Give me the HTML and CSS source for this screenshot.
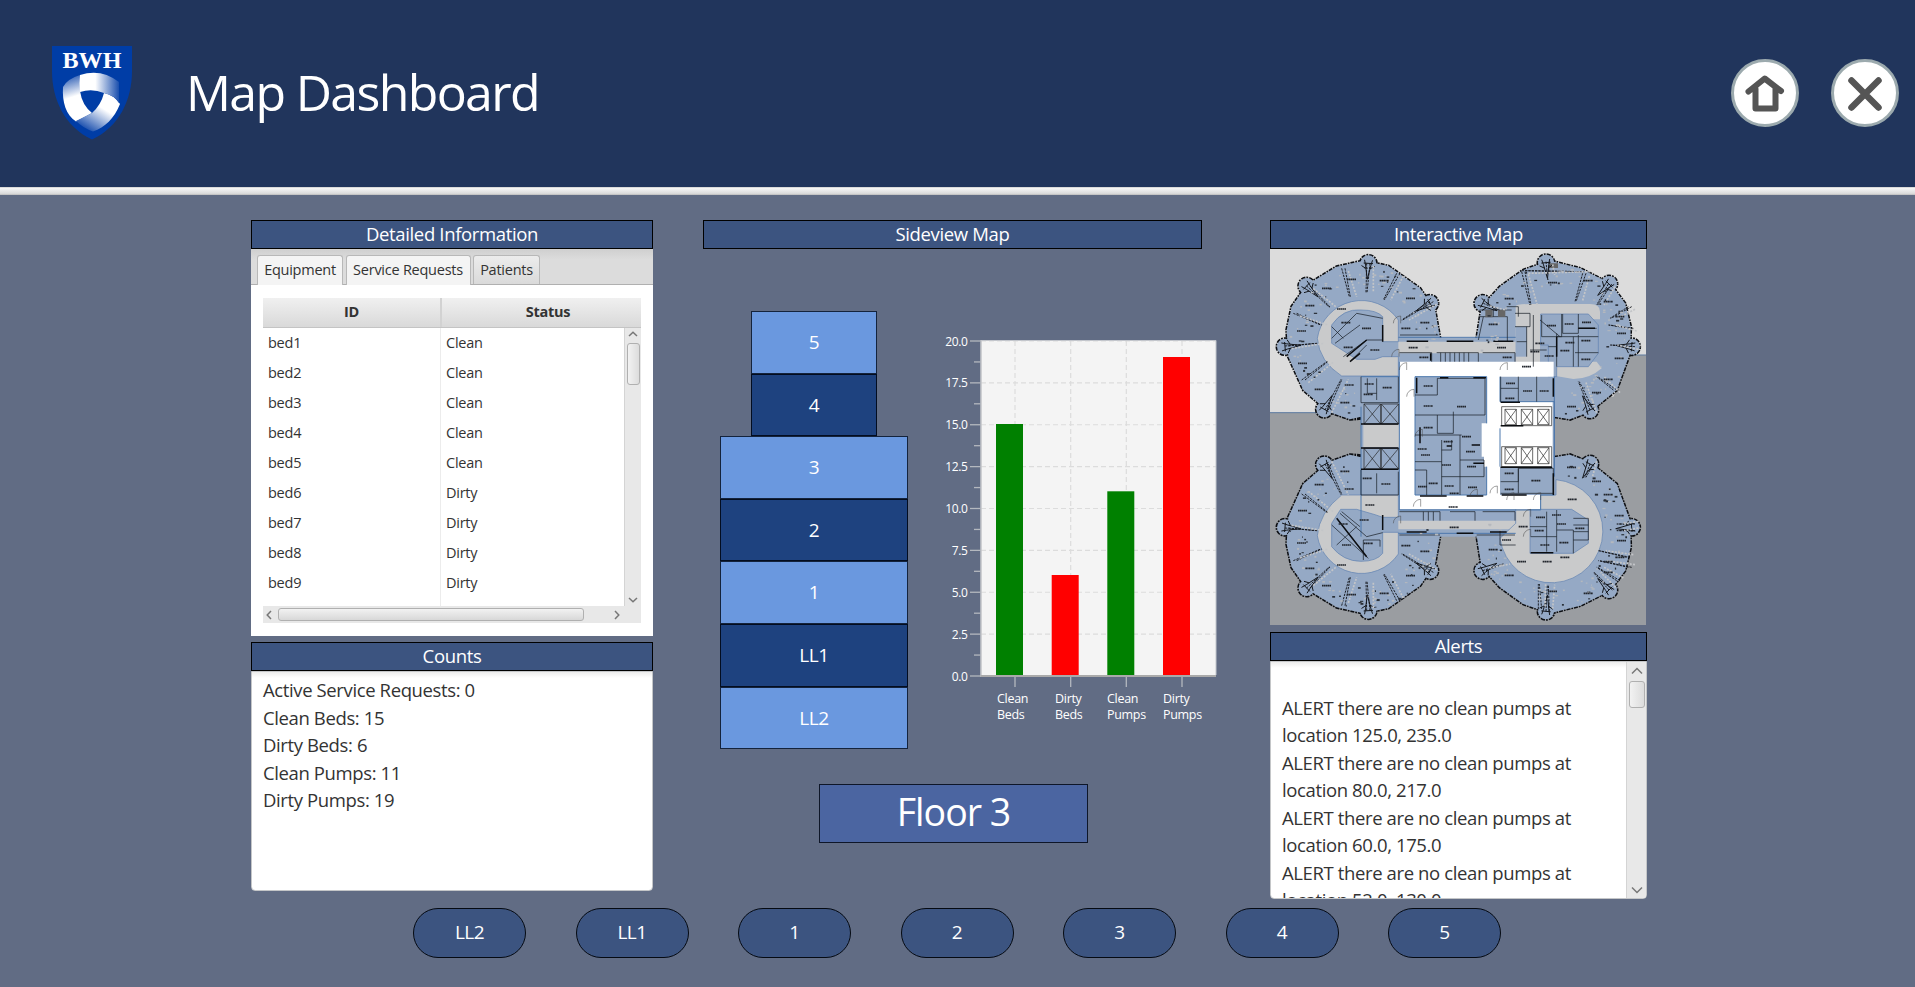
FILE: index.html
```
<!DOCTYPE html>
<html lang="en">
<head>
<meta charset="utf-8">
<title>Map Dashboard</title>
<link rel="stylesheet" href="styles.css">
</head>
<body>
<header class="top">
  <svg class="logo" viewBox="0 0 82 96" width="82" height="96">
    <defs>
      <linearGradient id="ga" x1="0" x2="1" y1="0" y2="0"><stop offset=".4" stop-color="#fff"/><stop offset="1" stop-color="#1a4fae"/></linearGradient>
      <linearGradient id="gb" x1=".1" x2=".3" y1="0" y2="1"><stop offset="0" stop-color="#1a4fae"/><stop offset=".5" stop-color="#fff"/></linearGradient>
      <linearGradient id="gc" x1="1" x2=".3" y1="0" y2="1"><stop offset=".45" stop-color="#fff"/><stop offset="1" stop-color="#1a4fae"/></linearGradient>
    </defs>
    <path d="M1 1H81V26C81 55 68 82 41 94.500C14 82 1 55 1 26Z" fill="#003da6"/>
    <text x="41" y="22.500" class="logo-text" text-anchor="middle" textLength="59" lengthAdjust="spacingAndGlyphs">BWH</text>
    <path d="M29 30Q16 34 12 42C11 57 15 70 25 76.500L41 68Q31 60 29 46Z" fill="url(#gb)"/>
    <path d="M69 59C63 74 54 82 42 86.500Q32 83 25 76L41 68Q50 60 53 48Q63 50 69 59Z" fill="url(#gc)"/>
    <path d="M29 30Q50 23 68 37V58Q63 50 53 48Q41 43 29 47Q28 38 29 30Z" fill="url(#ga)"/>
  </svg>
  <h1 class="title">Map Dashboard</h1>
  <div class="actions">
    <svg class="round" viewBox="0 0 70 70" width="70" height="70">
      <circle cx="35" cy="35" r="32.500" fill="#fff" stroke="#9caaae" stroke-width="3"/>
      <path d="M18.500 33.500L34.700 20.500L51 33M25.500 31V50.500H45.500V31" fill="none" stroke="#555" stroke-width="6" stroke-linecap="round" stroke-linejoin="round"/>
    </svg>
    <svg class="round" viewBox="0 0 70 70" width="70" height="70">
      <circle cx="35" cy="35" r="32.500" fill="#fff" stroke="#9caaae" stroke-width="3"/>
      <path d="M21.500 22.500L48.500 49.500M48.500 22.500L21.500 49.500" stroke="#555" stroke-width="6.500" stroke-linecap="round"/>
    </svg>
  </div>
</header>
<div class="divider"></div>

<main class="board">
  <section class="col left">
    <h2 class="bar">Detailed Information</h2>
    <div class="tabpane">
      <div class="tabs">
        <span class="tab on t1">Equipment</span><span class="tab on t2">Service Requests</span><span class="tab t3">Patients</span>
      </div>
      <div class="table">
        <div class="thead"><span class="c1">ID</span><span class="c2">Status</span></div>
        <div class="tbody">
          <div class="rows">
            <div class="row"><span>bed1</span><span>Clean</span></div>
            <div class="row"><span>bed2</span><span>Clean</span></div>
            <div class="row"><span>bed3</span><span>Clean</span></div>
            <div class="row"><span>bed4</span><span>Clean</span></div>
            <div class="row"><span>bed5</span><span>Clean</span></div>
            <div class="row"><span>bed6</span><span>Dirty</span></div>
            <div class="row"><span>bed7</span><span>Dirty</span></div>
            <div class="row"><span>bed8</span><span>Dirty</span></div>
            <div class="row"><span>bed9</span><span>Dirty</span></div>
            <div class="row"><span></span><span></span></div>
          </div>
          <div class="vbar">
            <svg viewBox="0 0 10 6" width="10" height="6"><path d="M1 5L5 1.200L9 5" class="chev"/></svg>
            <i class="thumb"></i>
            <svg class="end" viewBox="0 0 10 6" width="10" height="6"><path d="M1 1L5 4.800L9 1" class="chev"/></svg>
          </div>
        </div>
        <div class="hbar">
          <svg viewBox="0 0 6 10" width="6" height="10"><path d="M5 1L1.200 5L5 9" class="chev"/></svg>
          <i class="thumb wide"></i>
          <svg class="end-h" viewBox="0 0 6 10" width="6" height="10"><path d="M1 1L4.800 5L1 9" class="chev"/></svg>
        </div>
      </div>
    </div>
    <h2 class="bar">Counts</h2>
    <div class="area counts">Active Service Requests: 0<br>Clean Beds: 15<br>Dirty Beds: 6<br>Clean Pumps: 11<br>Dirty Pumps: 19</div>
  </section>

  <section class="col center">
    <h2 class="bar side">Sideview Map</h2>
    <div class="view">
      <div class="stack">
        <div class="floor small">5</div>
        <div class="floor small dark">4</div>
        <div class="floor">3</div>
        <div class="floor dark">2</div>
        <div class="floor">1</div>
        <div class="floor dark">LL1</div>
        <div class="floor">LL2</div>
      </div>
      <svg class="chart" viewBox="930 320 290 420" width="290" height="420">
        <rect x="981" y="340.500" width="235" height="335.500" fill="#f4f4f4"/>
        <g class="grid" id="grid"></g>
        <path d="M981 340.500H1216V675" fill="none" stroke="#c3c6cc" stroke-width="1"/>
        <path d="M981 340V676" stroke="#c4c6ca" stroke-width="1.600"/>
        <g fill="#008000"><rect x="996" y="424" width="27" height="252"/><rect x="1107.300" y="491.300" width="27" height="185"/></g>
        <g fill="#f00"><rect x="1051.700" y="575" width="27" height="101"/><rect x="1163" y="357" width="27" height="319"/></g>
        <path d="M980 676H1216" stroke="#aaa" stroke-width="2"/>
        <g id="ticks" class="ticks"></g>
        <g class="xlab">
          <text x="997" y="703">Clean</text><text x="997" y="719">Beds</text>
          <text x="1055" y="703">Dirty</text><text x="1055" y="719">Beds</text>
          <text x="1107" y="703">Clean</text><text x="1107" y="719">Pumps</text>
          <text x="1163" y="703">Dirty</text><text x="1163" y="719">Pumps</text>
        </g>
      </svg>
    </div>
    <div class="current">Floor 3</div>
  </section>

  <section class="col right">
    <h2 class="bar">Interactive Map</h2>
    <svg class="map" viewBox="30 117 1128 1128" width="376" height="376">
      <rect x="30" y="117" width="1128" height="1128" fill="#dcdcdc"/>
      <path d="M30 608H300L700 520L1060 560L1110 435H1158V1245H30Z" fill="#9a9da1"/>
      <path d="M30 608H220M1110 435H1158" stroke="#5d7ba0" stroke-width="3"/>
      <g id="shell" class="shell"></g>
      <g class="blue">
        <path d="M303 385H883V980H303Z"/>
        <path d="M415 385H767V500H415ZM415 860H767V970H415Z"/>
      </g>
      <!-- corridors -->
      <g fill="#c9cacb">
        <path d="M415 395H767V430H415ZM415 932H767V958H415ZM310 643H418V712H310Z"/>
        <path d="M767 290Q767 282 816 282H990Q1020 282 1020 305V328H840V500H767Z"/>
        <path d="M883 455H1010L1025 475Q990 507 940 507L883 497Z"/>
        <path d="M767 897H840V855H895V1060H767Z"/>
      </g>
      <path d="M415 330A134 134 0 0 0 172 385Q178 455 245 498H415V440H368L345 448H290L215 400V345Q250 295 303 300Q350 300 368 320V395H415Z" fill="#c9cacb" class="edge"/>
      <path d="M415 1032A134 134 0 0 1 172 977Q178 907 245 855H415V922H368L345 914L290 898L242 898L215 940V1010Q250 1054 303 1054Q350 1054 368 1030V967H415Z" fill="#c9cacb" class="edge"/>
      <path d="M888 809A155 155 0 1 1 720 985L767 940V897H840V855H888Z" fill="#c9cacb" class="edge"/>
      <path d="M810 898H935L985 930V1000L940 1030H810Z" class="blue edge"/>
      <g class="blue edge"><path d="M842 312H985L1015 345V430L985 470H890V500H865V405H842Z"/></g>
      <path d="M767 350H800V440H767Z" class="blue"/>
      <!-- white main hall -->
      <path fill="#fff" fill-rule="evenodd" d="M418 455H881V500H720V575H878V770H720V855H840V897H418ZM465 500V855H680V500Z"/>
      <path fill="#fff" d="M665 640H682V770H672V740H665Z"/>
      <path d="M720 655V770M303 500H418M303 590V980M418 455V900M465 500V855M465 500H680V640M720 500V575H883V770M883 500V800M465 855H680V770M418 900H842V855H883M415 382H767M415 970H767" class="wall"/>
      <g class="lift">
        <path d="M312 582h50v60h-50zl50 60m0-60l-50 60M364 582h52v60h-52zl52 60m0-60l-52 60"/>
        <path d="M312 715h50v62h-50zl50 62m0-62l-50 62M364 715h52v62h-52zl52 62m0-62l-52 62"/>
        <path fill="#fff" d="M725 590h150v57h-150zM725 710h150v60h-150z"/>
        <path d="M735 598h34v46h-34zl34 46m0-46l-34 46M784 598h34v46h-34zl34 46m0-46l-34 46M833 598h34v46h-34zl34 46m0-46l-34 46"/>
        <path d="M735 713h34v48h-34zl34 48m0-48l-34 48M784 713h34v48h-34zl34 48m0-48l-34 48M833 713h34v48h-34zl34 48m0-48l-34 48"/>
      </g>
      <g class="rooms">
        <path d="M465 555H532V505H675V615H465M532 615V670H580V605M465 675H605M600 675V855M545 690V855M465 755H545M600 750H672V800H600M465 780H500V855M545 800H600M575 690V720H545"/>
        <path d="M303 500V578H415V500M350 505V570M322 505V550H350M303 780V855H415V785M350 790V850M722 575V500M775 500V575M830 500V575M722 535H775M775 775V850M722 815H775V775H880V850H722"/>
        <path d="M418 428H515V455M530 428H655V455M668 428H765V455M542 428V455M556 428V455M570 428V455M584 428V455M598 428V455M612 428V455M626 428V455M418 905H540V932M570 905H645V932M668 905H765V932M490 905V932M505 905V932M520 905V932"/>
        <path d="M215 385L290 310L368 325M225 400L300 345M250 440L320 390H368M275 450L320 405M215 350L250 385M215 945L325 1045M240 910L320 980L368 968M245 905L300 950M230 1005L290 950M310 1050V990H360V1010"/>
        <path d="M845 315V380H905V312M908 312V370H955V312M955 355H1010M955 375V470M890 380H1015M890 370V470M940 380V470M945 428H1015M820 315V470M865 410H890M840 330L900 380M800 350V440M810 420H860M770 395H800"/>
        <path d="M860 905V1025M890 900V1025M812 980H890M890 960H940V1030M940 925H985V990H940M940 945H985M940 965H985M720 960V1005H767M810 950H860"/>
        <path d="M658 320H742V395M658 300H755M740 290H775V320M700 300V320M765 310H810V350H765M655 390L670 320"/>
        <path d="M418 975H540M650 975H765M420 375H535"/>
      </g>
      <path class="heavy" d="M440 394H505M560 394H640M700 394H760M470 503V550M480 652V700M540 503H565M640 503H678M560 708H575M640 760H672M660 705H635M722 577H780M722 772H876M722 647H790M303 642H415M303 714H415M303 778H415M368 345V395M368 915V960M440 966H500M590 970H640M690 966H740M880 505V560M880 790V855M512 430V452M725 855H800M260 440L320 390M270 455L300 430M230 925L320 1040M812 1028H880M890 380V440M955 355H1005M480 858H560M620 858H670"/>
      <g fill="#666"><path d="M676 300h22v22h-22zM714 300h22v20h-22zM868 160h26v14h-26z"/></g>
      <g id="details"></g>
    </svg>
    <h2 class="bar alerts-bar">Alerts</h2>
    <div class="area alerts">
      <div class="alert-text"><br>ALERT there are no clean pumps at<br>location 125.0, 235.0<br>ALERT there are no clean pumps at<br>location 80.0, 217.0<br>ALERT there are no clean pumps at<br>location 60.0, 175.0<br>ALERT there are no clean pumps at<br>location 52.0, 130.0</div>
      <div class="vbar big">
        <svg viewBox="0 0 12 8" width="12" height="8"><path d="M1 6.500L6 1.500L11 6.500" class="chev"/></svg>
        <i class="thumb"></i>
        <svg class="end" viewBox="0 0 12 8" width="12" height="8"><path d="M1 1.500L6 6.500L11 1.500" class="chev"/></svg>
      </div>
    </div>
  </section>
</main>

<nav class="floors">
  <button class="pill">LL2</button><button class="pill">LL1</button><button class="pill">1</button><button class="pill">2</button><button class="pill">3</button><button class="pill">4</button><button class="pill">5</button>
</nav>
<script src="app.js"></script>
</body>
</html>
```
FILE: styles.css
```
* { box-sizing: border-box; }
body {
  margin: 0; width: 1915px; height: 987px; overflow: hidden;
  background: #616c84; color: #333;
  font-family: "Open Sans", "Noto Sans", sans-serif;
}
h1, h2 { margin: 0; font-weight: 400; }
svg { display: block; flex: none; }

.top { display: flex; height: 187px; background: #21355c; padding: 45px 15px 0 51px; }
.logo-text { font: 700 24px "Liberation Serif", serif; fill: #fff; }
.title { margin-left: 53px; color: #fff; font-size: 50px; line-height: 94px; letter-spacing: -1.650px; }
.actions { display: flex; gap: 30px; margin: 13px 0 0 auto; }
.divider { height: 8px; background: linear-gradient(#c6c6c6 0, #f6f6f6 15%, #dcdcdc 80%, #bbb 100%); }

.board { display: flex; gap: 50px; height: 713px; padding: 25px 0 0 251px; }
.left { width: 402px; }
.center { width: 517px; }
.right { width: 377px; }
.bar {
  height: 29px; border: 1px solid #000; background: #3c5480; color: #fff;
  font-size: 18.5px; line-height: 25px; text-align: center; letter-spacing: -0.35px;
}
.side { width: 499px; }

.tabpane { height: 387px; margin-bottom: 6px; background: #fff; }
.tabs { display: flex; gap: 2.500px; height: 36px; padding: 6px 6px 0; border-bottom: 1px solid #b0b0b0; background: linear-gradient(#cfcfcf, #dcdcdc 30%); }
.tab {
  height: 29px; border: 1px solid #b8b8b8; border-bottom: 0; border-radius: 3px 3px 0 0;
  background: linear-gradient(#ececec, #dadada); font-size: 14.5px; line-height: 27px; text-align: center; letter-spacing: -0.25px; white-space: nowrap;
}
.tab.on { height: 30px; background: #f4f4f4; }
.t1 { width: 86px; }
.t2 { width: 125px; }
.t3 { width: 67px; }
.table { width: 378px; margin: 13px 0 0 12px; font-size: 14.5px; letter-spacing: -0.25px; }
.thead { display: flex; height: 30px; border-bottom: 1px solid #c4c4c4; background: linear-gradient(#f0f0f0, #d9d9d9); font-weight: 700; line-height: 28px; text-align: center; }
.c1 { width: 179px; border-right: 2px solid #d2d2d2; }
.c2 { width: 197px; padding-left: 15px; }
.tbody { display: flex; height: 278px; overflow: hidden; }
.rows { width: 361px; }
.row { display: flex; height: 30px; line-height: 29px; }
.row span { padding-left: 5px; }
.row span:first-child { width: 178px; border-right: 1px solid #ececec; }
.vbar { display: flex; flex-direction: column; align-items: center; width: 17px; padding: 3px 0; background: #e8e8e8; border-left: 1px solid #d4d4d4; }
.chev { fill: none; stroke: #777; stroke-width: 1.500; }
.thumb { display: block; width: 13px; height: 42px; margin-top: 6px; border: 1px solid #b0b0b0; border-radius: 3px; background: linear-gradient(90deg, #f2f2f2, #dcdcdc); }
.end { margin-top: auto; }
.hbar { display: flex; align-items: center; height: 17px; padding: 0 21px 0 3px; background: #e8e8e8; }
.thumb.wide { width: 306px; height: 13px; margin: 0 0 0 6px; background: linear-gradient(#f2f2f2, #d8d8d8); }
.end-h { margin-left: auto; }

.area { border: 1px solid #c4c6c8; border-radius: 0 0 4px 4px; background: #fff; font-size: 18.5px; line-height: 27.500px; letter-spacing: -0.38px; }
.counts { height: 220px; padding: 4px 11px; background: linear-gradient(#ececec, #fff 6px); }
.alerts { display: flex; height: 238px; overflow: hidden; background: linear-gradient(#ececec, #fff 6px); }
.alert-text { width: 355px; padding: 4px 0 0 11px; white-space: nowrap; }
.vbar.big { width: 20px; height: 236px; padding: 5px 0 4px; }
.big .thumb { width: 16px; height: 27px; margin-top: 6px; }
.alerts-bar { margin-top: 7px; }

.view { display: flex; height: 535px; padding: 62px 0 0 17px; }
.stack { display: flex; flex-direction: column; align-items: center; width: 188px; }
.floor {
  width: 188px; height: 62.600px; border: 1.500px solid #14233c; background: #6a98df; color: #fff;
  font-size: 19px; line-height: 60px; text-align: center; letter-spacing: -0.4px;
}
.small { width: 126px; }
.dark { background: #1e427f; border-color: #030d20; }
.chart { margin: 9px 0 0 22px; }
.grid { stroke: #dcdcdc; stroke-width: 1.200; stroke-dasharray: 5 3; }
.ticks { stroke: #b4b8bf; stroke-width: 1.300; }
.ticks text { stroke: none; fill: #fff; font-size: 12px; text-anchor: end; letter-spacing: -0.4px; }
.xlab { fill: #fff; font-size: 12.500px; letter-spacing: -0.3px; }
.current {
  width: 269px; height: 59px; margin-left: 116px; border: 1px solid #0e1628; background: #4b65a1; color: #fff;
  font-size: 37.500px; line-height: 53px; text-align: center; letter-spacing: -1px;
}

.map { width: 376px; height: 376px; }
.blue, .shell { fill: #95a9c5; }
.edge { stroke: #5e81b0; stroke-width: 2; }
.wall { fill: none; stroke: #4d78ad; stroke-width: 3; }
.lift { fill: none; stroke: #222; stroke-width: 2; }
.rooms { fill: none; stroke: #1c222b; stroke-width: 2.200; }
.heavy { fill: none; stroke: #0b0d10; stroke-width: 4.500; }
.rim { fill: none; stroke: #0c0e12; stroke-width: 9; stroke-dasharray: 12 3 5 3; }
.rim-blue { fill: none; stroke: #5a80b2; stroke-width: 4; }
.spoke { fill: none; stroke: #15181d; stroke-width: 2.800; stroke-dasharray: 7 3; }
.pale { fill: none; stroke: #c3c5c8; stroke-width: 5; stroke-dasharray: 6 4; }
.label { stroke: #22262d; stroke-width: 5; stroke-dasharray: 5 1 4 1; }

.floors { display: flex; gap: 49.500px; padding-left: 413px; }
.pill {
  width: 113px; height: 50px; padding: 0 0 2px; border: 1.500px solid #050a12; border-radius: 25px; background: #3c5480; color: #fff;
  font: 400 19px "Open Sans", "Noto Sans", sans-serif; letter-spacing: -0.5px;
}
```
FILE: app.js
```
const NS = 'http://www.w3.org/2000/svg';
const byId = id => document.getElementById(id);
function add(parent, name, attrs, text) {
  const el = document.createElementNS(NS, name);
  for (const k in attrs) el.setAttribute(k, attrs[k]);
  if (text) el.textContent = text;
  parent.appendChild(el);
}

// bar chart axes
const y = v => 676 - v * 16.75;
for (let v = 0; v <= 20; v += 2.5) {
  add(byId('grid'), 'path', { d: `M981 ${y(v)}H1216` });
  add(byId('ticks'), 'path', { d: `M970 ${y(v)}H981` });
  if (v < 20) add(byId('ticks'), 'path', { d: `M974 ${y(v + 1.25)}H981` });
  add(byId('ticks'), 'text', { x: 967.500, y: y(v) + 4.5 }, v.toFixed(1));
}
for (const x of [1015, 1070.7, 1126.3, 1182]) {
  add(byId('grid'), 'path', { d: `M${x} 341V676` });
  add(byId('ticks'), 'path', { d: `M${x} 677V687` });
}

// floor plan: four round patient towers
let seed = 7;
const rnd = () => (seed = (seed * 16807) % 2147483647) / 2147483647;
const shell = byId('shell'), details = byId('details');
const label = (x, y) => add(details, 'path', { d: `M${x - 14} ${y}h28`, class: 'label' });
const flip = v => 1362 - v;
const left = {
  cx: 310, rimEnd: 0,
  outline: [[415,330],[430,498],[303,500],[303,620],[270,628],[205,605],[130,540],[85,440],[80,360],[95,290],[140,225],[230,170],[310,152],[385,168],[480,235],[525,300],[540,385],[415,390]],
  rim: [[303,625],[270,628],[205,605],[130,540],[85,440],[80,360],[95,290],[140,225],[230,170],[310,152],[385,168],[480,235],[525,300],[540,385]],
  bumps: [[325,160],[140,228],[75,410],[193,598],[510,280]],
  spokes: [[320,160,318,248],[140,228,208,292],[75,408,170,400],[195,600,243,508],[510,275,425,330],[245,175,268,260],[410,190,370,270],[100,310,182,345],[125,510,200,455]],
  labels: [[275,208],[373,212],[452,265],[495,338],[438,355],[200,235],[150,287],[125,363],[128,460],[178,538],[268,525],[255,578],[245,297]]
};
const right = {
  cx: 880,
  outline: [[768,350],[800,350],[800,500],[883,500],[883,620],[930,628],[990,605],[1070,540],[1110,430],[1112,350],[1095,280],[1050,220],[960,175],[870,152],[790,180],[720,230],[665,290],[650,385],[768,390]],
  rim: [[883,620],[930,628],[990,605],[1070,540],[1110,430],[1112,350],[1095,280],[1050,220],[960,175],[870,152],[790,180],[720,230],[665,290],[650,385]],
  bumps: [[858,158],[1047,222],[1115,410],[990,600],[668,280]],
  labels: [[878,218],[748,266],[985,212],[1045,275],[1080,320],[1085,370],[1078,445],[1045,508],[1010,548],[935,590],[700,343]]
};
const pts = (a, f) => a.map(([px, py]) => `${px},${f(py)}`).join(' ');
const same = v => v;
for (const [w, f, spokes] of [
  [left, same, left.spokes], [left, flip, left.spokes],
  [right, same, [[858,155,862,195],[785,185,810,285],[968,190,945,275],[1045,222,1010,285],[1115,410,1050,405],[990,600,955,515],[1105,290,1050,325],[1110,355,1045,345],[1060,540,1010,500],[785,182,970,185],[670,280,715,300]]],
  [right, flip, [[858,158,862,238],[835,165,835,240],[668,280,728,300],[1047,222,1000,275],[1115,400,1070,400],[1115,420,1070,420],[1105,290,1015,310],[1100,320,1015,340],[990,600,975,560],[1070,250,1010,290]]]
]) {
  // outer wall strokes sit under the fills so only their outer half shows
  add(shell, 'polyline', { points: pts(w.rim, f), class: 'rim' });
  for (const [bx, by] of w.bumps)
    add(shell, 'circle', { cx: bx, cy: f(by), r: 24, class: 'rim', 'stroke-dashoffset': rnd() * 20 });
  for (const [bx, by] of w.bumps) add(shell, 'circle', { cx: bx, cy: f(by), r: 24 });
  add(shell, 'polygon', { points: pts(w.outline, f) });
  for (const [bx, by] of w.bumps) {
    const dx = w.cx - bx, dy = 390 - by, n = Math.hypot(dx, dy), ux = dx / n, uy = dy / n;
    const p = (a, b) => `${bx + ux * a - uy * b} ${f(by + uy * a + ux * b)}`;
    // column wedge pointing at the tower centre
    add(details, 'path', { d: `M${p(-10, -12)}L${p(6, -8)}L${p(48, 0)}L${p(6, 8)}L${p(-10, 12)}M${p(0, -14)}L${p(0, 14)}M${p(8, -20)}L${p(16, -6)}M${p(8, 20)}L${p(16, 6)}`, fill: 'none', stroke: '#14171c', 'stroke-width': 3 });
  }
  for (const [a, b, c, d] of spokes) {
    add(details, 'path', { d: `M${a} ${f(b)}L${c} ${f(d)}M${a + 10} ${f(b)}L${c + 3} ${f(d)}`, class: 'spoke' });
    add(details, 'path', { d: `M${a + 20} ${f(b + 8)}L${c + 22} ${f(d)}`, class: 'pale' });
  }
  // fixtures scattered through the outer rooms
  for (let i = 0; i < 90; i++) {
    const t = rnd() * Math.PI * 1.5 + (w === left ? Math.PI * .55 : -Math.PI * 1.05), r = 160 + rnd() * 62;
    const fx = w.cx + Math.cos(t) * r, fy = 390 + Math.sin(t) * r;
    const dark = rnd() < .35;
    add(details, 'rect', { x: fx, y: f(fy), width: 3 + rnd() * 7, height: 3 + rnd() * 3, fill: dark ? '#2a3038' : '#b4b8be' });
  }
  for (const [lx, ly] of w.labels) label(lx, f(ly));
}
// room labels in the core and the inner rings
for (const [lx, ly] of [[258,338],[320,355],[265,412],[345,420],[875,347],[928,342],[980,337],[978,392],[930,398],[915,422],[978,448],[868,438],[825,425],[840,400],[460,413],[725,413],[492,442],[742,442],[800,470],[505,528],[505,588],[605,590],[505,653],[620,680],[565,695],[487,717],[497,735],[632,725],[560,765],[635,770],[520,820],[488,830],[568,828],[638,832],[583,850],[752,520],[750,565],[803,543],[853,543],[382,533],[328,522],[325,553],[828,812],[748,790],[748,838],[322,805],[378,822],[330,885],[580,891],[583,952],[937,868],[250,942],[313,930],[325,1000],[260,1005],[842,922],[890,915],[905,942],[838,962],[855,1005],[912,998],[960,955],[785,1055],[862,1055],[915,1042],[790,950],[740,990],[1045,1055]]) label(lx, ly);
// door swings
for (const [dx, dy] of [[418,480],[720,480],[440,560],[465,680],[690,850],[740,870],[400,340],[400,940],[395,440],[790,920],[790,980],[460,890],[630,860],[820,870]])
  add(details, 'path', { d: `M${dx} ${dy}a22 22 0 0 1 22 -22v22`, fill: 'none', stroke: '#444', 'stroke-width': 1.5 });
```
